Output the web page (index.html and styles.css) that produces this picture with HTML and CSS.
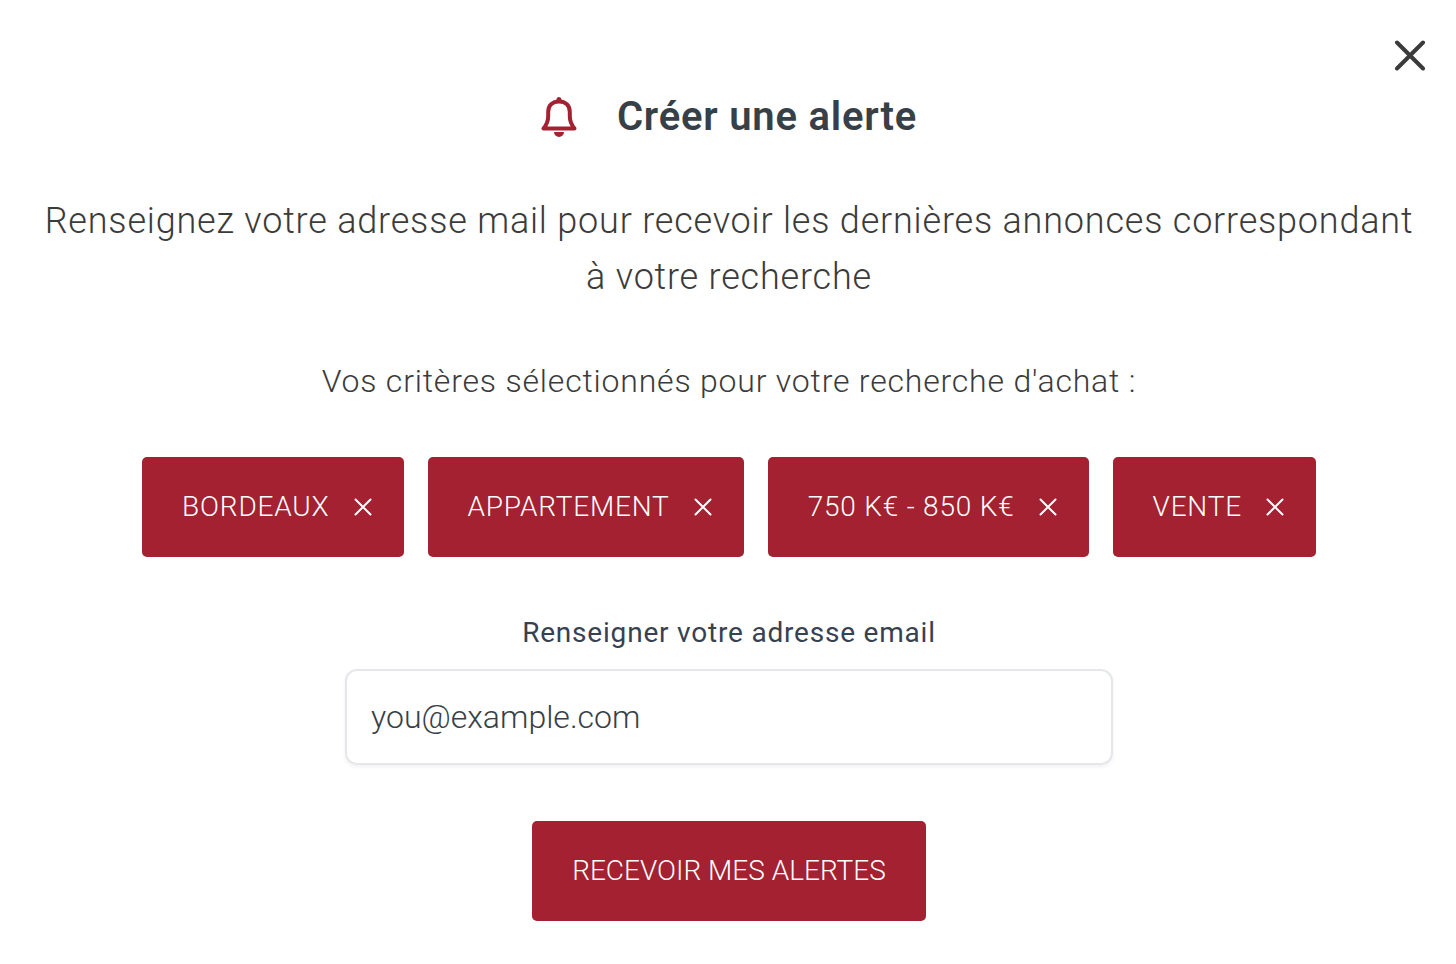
FILE: index.html
```html
<!DOCTYPE html>
<html lang="fr">
<head>
<meta charset="utf-8">
<meta name="viewport" content="width=device-width, initial-scale=1">
<title>Créer une alerte</title>
<link rel="stylesheet" href="styles.css">
</head>
<body>
<main class="dialog">
  <div class="topbar">
    <button class="close" type="button" aria-label="Fermer">
      <svg width="32" height="32" viewBox="0 0 32 32"><path d="M3 3.500 29 29.500M29 3.500 3 29.500"/></svg>
    </button>
  </div>
  <header class="heading">
    <svg class="bell" width="36" height="42" viewBox="0 0 36 42"><path class="bell-line" d="M2.500 32.500H33.500C30.500 29 28.800 25 28.800 20V16C28.800 9.500 24.500 5.500 18 5.500S7.200 9.500 7.200 16V20C7.200 25 5.500 29 2.500 32.500Z"/><path class="bell-fill" d="M15.500 5V3.500a2.500 2.500 0 0 1 5 0V5ZM13 36H23a5 5 0 0 1-10 0Z"/></svg>
    <h1 class="title">Créer une alerte</h1>
  </header>
  <p class="intro">Renseignez votre adresse mail pour recevoir les dernières annonces correspondant à votre recherche</p>
  <p class="criteria">Vos critères sélectionnés pour votre recherche d'achat :</p>
  <div class="tags">
    <button class="tag" type="button">BORDEAUX<svg class="cross" width="20" height="20" viewBox="0 0 20 20"><path d="M2.500 2.500 17.500 17.500M17.500 2.500 2.500 17.500"/></svg></button>
    <button class="tag" type="button">APPARTEMENT<svg class="cross" width="20" height="20" viewBox="0 0 20 20"><path d="M2.500 2.500 17.500 17.500M17.500 2.500 2.500 17.500"/></svg></button>
    <button class="tag" type="button">750 K€ - 850 K€<svg class="cross" width="20" height="20" viewBox="0 0 20 20"><path d="M2.500 2.500 17.500 17.500M17.500 2.500 2.500 17.500"/></svg></button>
    <button class="tag" type="button">VENTE<svg class="cross" width="20" height="20" viewBox="0 0 20 20"><path d="M2.500 2.500 17.500 17.500M17.500 2.500 2.500 17.500"/></svg></button>
  </div>
  <form class="form">
    <label class="label" for="email">Renseigner votre adresse email</label>
    <input class="email" id="email" type="email" placeholder="you@example.com">
    <button class="submit" type="button">RECEVOIR MES ALERTES</button>
  </form>
</main>
</body>
</html>
```
FILE: styles.css
```css
* { box-sizing: border-box; }
body {
  margin: 0;
  background: #fff;
  color: #3b3b3b;
  font-family: Roboto, "Liberation Sans", sans-serif;
  font-size: 32px;
  font-weight: 300;
  letter-spacing: 0.025em;
}
button, input { font: inherit; }
svg { display: block; fill: none; flex: none; }
.dialog { padding: 39px 30px 43px 32px; }
.topbar { display: flex; justify-content: flex-end; }
.close { padding: 0; border: 0; background: none; stroke: #3b3b3b; stroke-width: 4; stroke-linecap: round; cursor: pointer; }
.heading { display: flex; justify-content: center; align-items: center; gap: 40px; margin-top: 18px; }
.bell-line { stroke: #a32130; stroke-width: 4; stroke-linejoin: round; }
.bell-fill { fill: #a32130; }
.title { margin: 0; font-size: 40px; line-height: 56px; font-weight: 600; color: #374047; }
.intro { margin: 48px 0 0; font-size: 36px; line-height: 56px; text-align: center; }
.criteria { margin: 52px 0 0; font-size: 32px; line-height: 48px; text-align: center; }
.tags { display: flex; flex-wrap: wrap; justify-content: center; gap: 24px; margin-top: 52px; }
.tag, .submit {
  border: 0;
  border-radius: 5px;
  background: #a32130;
  color: #fff;
  font-size: 28px;
  line-height: 40px;
  cursor: pointer;
}
.tag { display: flex; align-items: center; gap: 23px; padding: 30px 31px 30px 40px; letter-spacing: inherit; }
.cross { stroke: #fff; stroke-width: 2; stroke-linecap: round; }
.form { display: flex; flex-direction: column; align-items: center; margin-top: 56px; }
.label { font-size: 28px; line-height: 40px; font-weight: 400; color: #374151; }
.email {
  width: 100%;
  max-width: 768px;
  margin-top: 16px;
  padding: 22px 24px;
  border: 2px solid #e5e7eb;
  border-radius: 12px;
  box-shadow: 0 2px 4px rgb(0 0 0 / 6%);
  font-size: 32px;
  line-height: 48px;
  color: #3b3b3b;
}
.email::placeholder { color: #374047; opacity: 1; }
.submit { margin-top: 56px; padding: 30px 40px; }
```
